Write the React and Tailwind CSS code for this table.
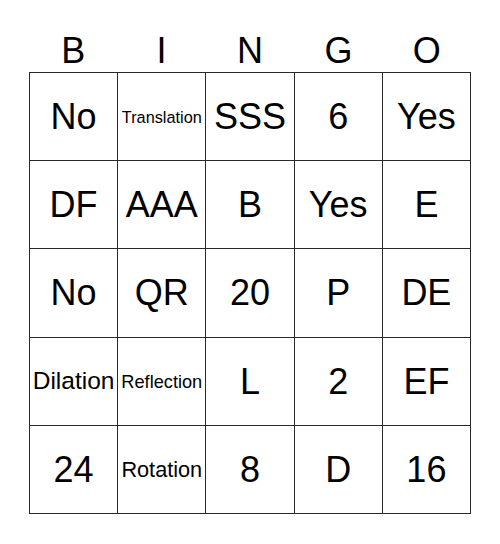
const letters = ["B", "I", "N", "G", "O"];

const cells = [
  ["No", "Translation", "SSS", "6", "Yes"],
  ["DF", "AAA", "B", "Yes", "E"],
  ["No", "QR", "20", "P", "DE"],
  ["Dilation", "Reflection", "L", "2", "EF"],
  ["24", "Rotation", "8", "D", "16"],
];

const sizes = {
  Translation: "text-[16.3px]",
  Reflection: "text-[18.2px]",
  Rotation: "text-[21.7px]",
  Dilation: "text-[24.5px]",
};

export default function App() {
  return (
    <div
      className="w-[500px] h-[544px] bg-white text-black"
      style={{ fontFamily: '"Liberation Sans", Arial, sans-serif' }}
    >
      <div className="ml-[29px] w-[442px] pt-[33px] grid grid-cols-5">
        {letters.map((l) => (
          <div key={l} className="h-[36px] leading-[36px] text-[36px] text-center">
            {l}
          </div>
        ))}
      </div>
      <div className="ml-[29px] mt-[3px] w-[442px] h-[442px] grid grid-cols-5 grid-rows-5 border-l border-t border-[#2a2a2a]">
        {cells.flat().map((c, i) => (
          <div
            key={i}
            className={`flex items-center justify-center border-r border-b border-[#2a2a2a] whitespace-nowrap overflow-hidden leading-none pt-[1px] ${
              sizes[c] || "text-[36px]"
            }`}
          >
            {c}
          </div>
        ))}
      </div>
    </div>
  );
}
